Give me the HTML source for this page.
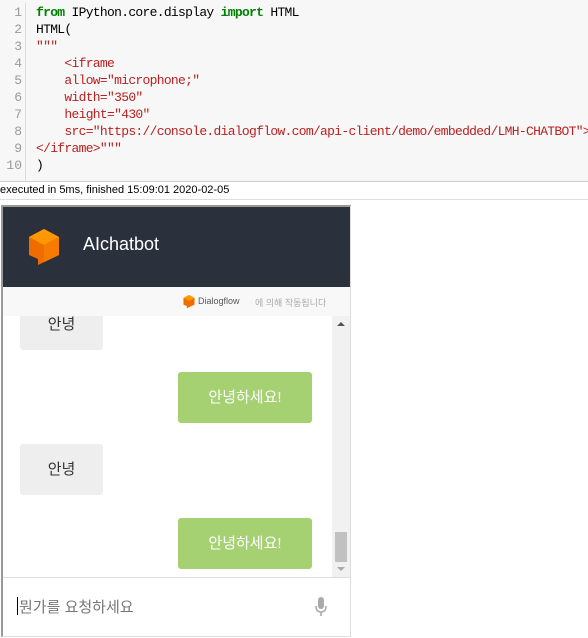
<!DOCTYPE html>
<html><head><meta charset="utf-8"><style>
body{margin:0;width:588px;height:638px;background:#fff;position:relative;overflow:hidden;font-family:"Liberation Sans","Noto Sans CJK KR",sans-serif}
.code{position:absolute;left:0;top:0;width:588px;height:181px;background:#f7f7f7}
.gut{position:absolute;left:0;top:3px;width:25px;border-right:1px solid #ddd;height:178px}
.ln{position:absolute;left:0;width:22px;text-align:right;color:#999;font:13px "Liberation Mono",monospace}
.cl{position:absolute;left:36px;font:13px "Liberation Mono",monospace;color:#000;white-space:pre;letter-spacing:-0.7px}
.k{color:#008000;font-weight:bold}.s{color:#ba2121}
.status{position:absolute;left:0;top:181px;width:588px;height:17px;border-top:1px solid #ccc;border-bottom:1px solid #ddd;font-size:11px;line-height:17px;color:#000}
.frame{position:absolute;left:1px;top:205px;width:347px;height:429px;border-left:2px solid #999;border-top:2px solid #999;border-right:1px solid #ddd;border-bottom:1px solid #ddd;overflow:hidden}
.hd{position:absolute;left:0;top:0;width:347px;height:80px;background:#2b303d}
.ttl{position:absolute;left:80px;top:27px;color:#fff;font-size:18px}
.cred{position:absolute;left:0;top:80px;width:347px;height:29px;background:#f8f8f8;font-size:9px;color:#666}
.chat{position:absolute;left:0;top:109px;width:329px;height:261px;background:#fff;overflow:hidden}
.sb{position:absolute;left:329px;top:109px;width:18px;height:261px;background:#f1f1f1}
.b{position:absolute;font-size:15px;text-align:center;border-radius:3px}
.l{background:#eeeeee;color:#333;width:83px;height:51px;line-height:51px;left:17px}
.r{background:#a5d173;color:#fff;width:134px;height:51px;line-height:51px;left:175px}
.inp{position:absolute;left:0;top:370px;width:347px;height:59px;border-top:1px solid #ddd;background:#fff}
</style></head><body>
<div class="code"><div class="gut"></div>
<div class="ln" style="top:5px">1</div><div class="ln" style="top:22px">2</div><div class="ln" style="top:39px">3</div><div class="ln" style="top:56px">4</div><div class="ln" style="top:73px">5</div><div class="ln" style="top:90px">6</div><div class="ln" style="top:107px">7</div><div class="ln" style="top:124px">8</div><div class="ln" style="top:141px">9</div><div class="ln" style="top:158px">10</div>
<div class="cl" style="top:5px"><span class="k">from</span> IPython.core.display <span class="k">import</span> HTML</div>
<div class="cl" style="top:22px">HTML(</div>
<div class="cl s" style="top:39px">"""</div>
<div class="cl s" style="top:56px">    &lt;iframe</div>
<div class="cl s" style="top:73px">    allow="microphone;"</div>
<div class="cl s" style="top:90px">    width="350"</div>
<div class="cl s" style="top:107px">    height="430"</div>
<div class="cl s" style="top:124px">    src="https://console.dialogflow.com/api-client/demo/embedded/LMH-CHATBOT"&gt;</div>
<div class="cl s" style="top:141px">&lt;/iframe&gt;"""</div>
<div class="cl" style="top:158px">)</div>
</div>
<div class="status">executed in 5ms, finished 15:09:01 2020-02-05</div>
<div class="frame">
<div class="hd"><svg style="position:absolute;left:25px;top:22px" width="32" height="38" viewBox="0 0 32 38"><polygon points="16,0 31,8 31,26 10,36 10,30 1,26 1,8" fill="#ef6c00"/><polygon points="16,0 31,8 16,16 1,8" fill="#ff9800"/><polygon points="16,16 31,8 31,26 16,33" fill="#f57c00"/></svg><div class="ttl">AIchatbot</div></div>
<div class="cred"><svg style="position:absolute;left:180px;top:8px" width="12" height="14" viewBox="0 0 32 38"><polygon points="16,0 31,8 31,26 10,36 10,30 1,26 1,8" fill="#ef6c00"/><polygon points="16,0 31,8 16,16 1,8" fill="#ff9800"/></svg><span style="position:absolute;left:195px;top:9px;color:#555">Dialogflow</span><span style="position:absolute;left:252px;top:9px;color:#aaa">에 의해 작동됩니다</span></div>
<div class="chat">
<div class="b l" style="top:-17px">안녕</div>
<div class="b r" style="top:56px">안녕하세요!</div>
<div class="b l" style="top:128px">안녕</div>
<div class="b r" style="top:202px">안녕하세요!</div>
</div>
<div class="sb"><div style="position:absolute;left:3px;top:216px;width:12px;height:30px;background:#c1c1c1"></div><div style="position:absolute;left:5px;top:6px;border:4px solid transparent;border-bottom:4px solid #555;border-top:0"></div><div style="position:absolute;left:5px;top:251px;border:4px solid transparent;border-top:4px solid #aaa;border-bottom:0"></div></div>
<div class="inp"><div style="position:absolute;left:14px;top:19px;width:1px;height:18px;background:#000"></div><span style="position:absolute;left:16px;top:18px;font-size:15px;color:#777">뭔가를 요청하세요</span>
<svg style="position:absolute;left:312px;top:19px" width="12" height="20" viewBox="0 0 12 20"><rect x="3" y="0" width="6" height="12" rx="3" fill="#aaa"/><path d="M1 9 Q1 15 6 15 Q11 15 11 9" stroke="#aaa" stroke-width="1.5" fill="none"/><rect x="5.2" y="15" width="1.6" height="4" fill="#aaa"/></svg></div>
</div>
</body></html>
